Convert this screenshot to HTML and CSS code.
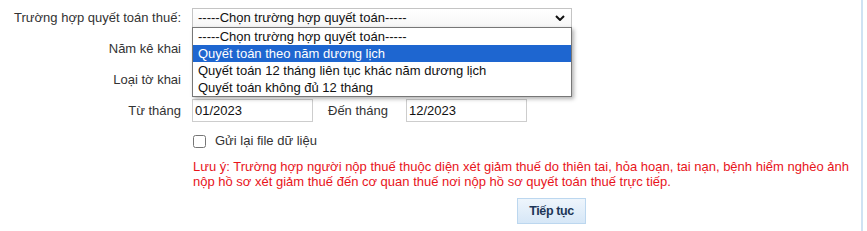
FILE: index.html
```html
<!DOCTYPE html>
<html lang="vi">
<head>
    <meta charset="UTF-8">
    <meta name="viewport" content="width=device-width, initial-scale=1.0">
    <title>Quyết toán thuế</title>
    <link rel="stylesheet" href="styles.css">
</head>
<body>
    <div class="page">
        <div class="form">
            <div class="row">
                <label class="lbl">Trường hợp quyết toán thuế:</label>
                <div class="select-wrap">
                    <div class="select">
                        <span>-----Chọn trường hợp quyết toán-----</span>
                        <svg class="arrow" width="10" height="6" viewBox="0 0 10 6">
                            <path d="M1 1 L5 5 L9 1" fill="none" stroke="#111" stroke-width="2"/>
                        </svg>
                    </div>
                    <ul class="options">
                        <li>-----Chọn trường hợp quyết toán-----</li>
                        <li class="active">Quyết toán theo năm dương lịch</li>
                        <li>Quyết toán 12 tháng liên tục khác năm dương lịch</li>
                        <li>Quyết toán không đủ 12 tháng</li>
                    </ul>
                </div>
            </div>
            <div class="row">
                <label class="lbl">Năm kê khai</label>
            </div>
            <div class="row">
                <label class="lbl">Loại tờ khai</label>
            </div>
            <div class="row">
                <label class="lbl">Từ tháng</label>
                <input class="txt" type="text" value="01/2023">
                <label class="lbl2">Đến tháng</label>
                <input class="txt" type="text" value="12/2023">
            </div>
            <div class="row row-check">
                <input class="chk" type="checkbox" id="guilai">
                <label for="guilai">Gửi lại file dữ liệu</label>
            </div>
            <p class="note">Lưu ý: Trường hợp người nộp thuế thuộc diện xét giảm thuế do thiên tai, hỏa hoạn, tai nạn, bệnh hiểm nghèo ảnh<br>nộp hồ sơ xét giảm thuế đến cơ quan thuế nơi nộp hồ sơ quyết toán thuế trực tiếp.</p>
            <div class="actions">
                <button class="btn" type="button">Tiếp tục</button>
            </div>
        </div>
    </div>
</body>
</html>
```

FILE: styles.css
```css
*{
    box-sizing: border-box;
}
html,body{
    margin: 0;
    padding: 0;
    background: #fff;
}
body{
    font-family: "Liberation Sans", Arial, sans-serif;
    font-size: 13px;
    color: #333;
}
.page{
    width: 863px;
    height: 231px;
    border-right: 2px solid #cfe2f3;
}
.form{
    padding-top: 2px;
}
.row{
    display: flex;
    align-items: center;
    height: 31px;
}
.lbl{
    width: 181px;
    text-align: right;
    margin-right: 11px;
}
.lbl2{
    margin: 0 18px 0 15px;
}
.select-wrap{
    position: relative;
    width: 380px;
}
.select{
    height: 20px;
    border: 1px solid #c4c4c4;
    background: linear-gradient(#fff, #f6f6f6);
    display: flex;
    align-items: center;
    justify-content: space-between;
    padding: 0 6px 0 5px;
    color: #111;
}
.arrow{
    margin-top: 1px;
}
.options{
    position: absolute;
    left: 0;
    top: 19px;
    width: 380px;
    margin: 0;
    padding: 0;
    list-style: none;
    background: #fff;
    border: 1px solid #777;
    box-shadow: 2px 2px 4px rgba(0,0,0,0.3);
    color: #111;
    z-index: 2;
}
.options li{
    height: 17px;
    line-height: 17px;
    padding-left: 5px;
}
.options .active{
    background: #1e66d0;
    color: #fff;
}
.txt{
    width: 121px;
    height: 23px;
    border: 1px solid #cdcdcd;
    padding: 0 2px;
    font-family: inherit;
    font-size: 13px;
    color: #111;
    outline: none;
}
.row-check{
    height: 29px;
    padding-left: 193px;
}
.chk{
    width: 13px;
    height: 13px;
    margin: 1px 9px 0 0;
}
.note{
    margin: 4px 0 0 193px;
    line-height: 15px;
    color: #e8141b;
}
.actions{
    padding: 9px 0 0 517px;
}
.btn{
    width: 69px;
    height: 26px;
    border: 1px solid #bcd7ef;
    background: linear-gradient(#eef5fc, #d6e7f7);
    color: #1c3657;
    font-family: inherit;
    font-size: 12.5px;
    font-weight: bold;
    letter-spacing: -0.4px;
    padding: 0;
}
```
